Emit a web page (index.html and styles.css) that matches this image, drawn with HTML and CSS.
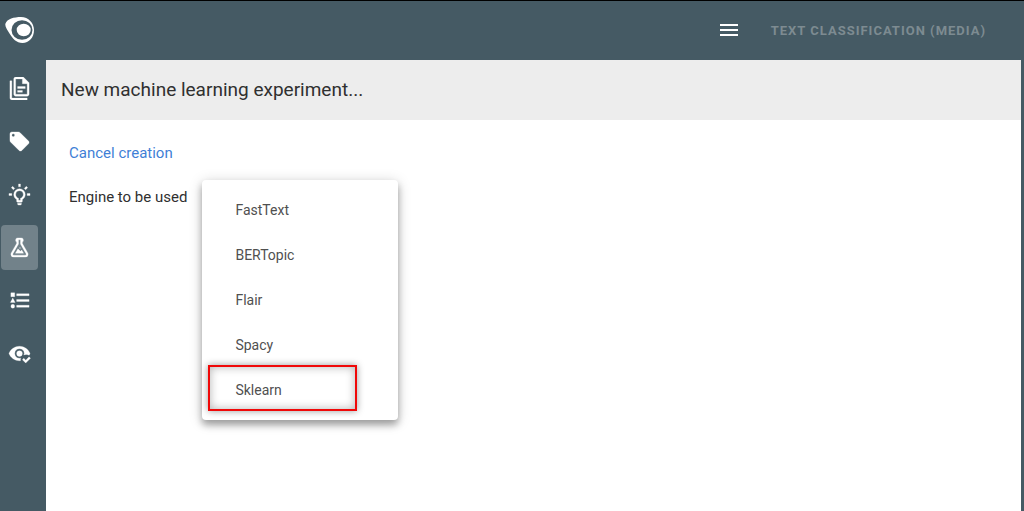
FILE: index.html
```html
<!DOCTYPE html>
<html lang="en">
<head>
  <meta charset="UTF-8" />
  <title>New machine learning experiment</title>
  <meta name="viewport" content="width=device-width, initial-scale=1" />
  <link rel="stylesheet" href="styles.css">
</head>
<body>
  <header class="topbar">
    <a class="logo" href="#" aria-label="Home">
      <svg width="30" height="28" viewBox="0 0 30 28">
        <path fill="#fff" d="M.5 7.500C2 3 9 1 16 1C23.500 1 29 7 29 14C29 21.500 24 27 17.500 27C11.500 27 7.500 22.500 4.500 17.500C2.500 14 -.5 10.500 .5 7.500Z"/>
        <ellipse cx="17" cy="14" rx="10.500" ry="9.800" fill="#455a64"/>
        <ellipse cx="18.700" cy="14" rx="7" ry="6.200" fill="#fff"/>
      </svg>
    </a>
    <div class="topbar-right">
      <button class="menu-button" aria-label="Menu">
        <svg width="24" height="24" viewBox="0 0 24 24"><path d="M3 6H21V8H3V6M3 11H21V13H3V11M3 16H21V18H3V16Z"/></svg>
      </button>
      <button class="project" disabled>Text classification (media)</button>
    </div>
  </header>

  <div class="layout">
    <nav class="sidebar">
      <a href="#" aria-label="Documents">
        <svg viewBox="0 0 24 24"><path d="M16 0H8C6.900 0 6 .9 6 2V18C6 19.100 6.900 20 8 20H20C21.100 20 22 19.100 22 18V6L16 0M20 18H8V2H15V7H20V18M4 4V22H20V24H4C2.900 24 2 23.100 2 22V4H4M10 10V12H18V10H10M10 14V16H15V14H10Z"/></svg>
      </a>
      <a href="#" aria-label="Labels">
        <svg viewBox="0 0 24 24"><path d="M5.500 7A1.500 1.500 0 0 1 4 5.500A1.500 1.500 0 0 1 5.500 4A1.500 1.500 0 0 1 7 5.500A1.500 1.500 0 0 1 5.500 7M21.410 11.580L12.410 2.580C12.050 2.220 11.550 2 11 2H4C2.890 2 2 2.890 2 4V11C2 11.550 2.220 12.050 2.590 12.410L11.580 21.410C11.950 21.770 12.450 22 13 22C13.550 22 14.050 21.770 14.410 21.410L21.410 14.410C21.780 14.050 22 13.550 22 13C22 12.440 21.770 11.940 21.410 11.580Z"/></svg>
      </a>
      <a href="#" aria-label="Suggestions">
        <svg viewBox="0 0 24 24"><path d="M20 11H23V13H20V11M1 11H4V13H1V11M13 1V4H11V1H13M4.920 3.500L7.050 5.640L5.630 7.050L3.500 4.930L4.920 3.500M16.950 5.630L19.070 3.500L20.500 4.930L18.370 7.050L16.950 5.630M12 6A6 6 0 0 1 18 12C18 14.220 16.790 16.160 15 17.200V19A1 1 0 0 1 14 20H10A1 1 0 0 1 9 19V17.200C7.210 16.160 6 14.220 6 12A6 6 0 0 1 12 6M14 21V22A1 1 0 0 1 13 23H11A1 1 0 0 1 10 22V21H14M11 18H13V15.870C14.730 15.430 16 13.860 16 12A4 4 0 0 0 12 8A4 4 0 0 0 8 12C8 13.860 9.270 15.430 11 15.870V18Z"/></svg>
      </a>
      <a class="active" href="#" aria-label="Experiments">
        <svg viewBox="0 0 24 24"><path d="M5 19A1 1 0 0 0 6 20H18A1 1 0 0 0 19 19C19 18.790 18.930 18.590 18.820 18.430L13 8.350V4H11V8.350L5.180 18.430C5.070 18.590 5 18.790 5 19M6 22A3 3 0 0 1 3 19C3 18.400 3.180 17.840 3.500 17.370L9 7.810V6A1 1 0 0 1 8 5V4A2 2 0 0 1 10 2H14A2 2 0 0 1 16 4V5A1 1 0 0 1 15 6V7.810L20.500 17.370C20.820 17.840 21 18.400 21 19A3 3 0 0 1 18 22H6M13 16L14.340 14.660L16.270 18H7.730L10.390 13.390L13 16M12.500 12A.5 .5 0 0 1 13 12.500A.5 .5 0 0 1 12.500 13A.5 .5 0 0 1 12 12.500A.5 .5 0 0 1 12.500 12Z"/></svg>
      </a>
      <a href="#" aria-label="Lists">
        <svg viewBox="0 0 24 24"><path d="M9 5V7H22V5H9M9 13H22V11H9V13M9 19H22V17H9V19M3 4H7V8H3V4M5 9.500L7.500 14H2.500L5 9.500M5 16A2 2 0 0 1 5 20A2 2 0 0 1 5 16Z"/></svg>
      </a>
      <a href="#" aria-label="Review">
        <svg viewBox="0 0 24 24"><path d="M23.500 17L18.500 22L15 18.500L16.500 17L18.500 19L22 15.500L23.500 17M12 9A3 3 0 0 1 15 12A3 3 0 0 1 12 15A3 3 0 0 1 9 12A3 3 0 0 1 12 9M12 17C12.500 17 12.970 16.930 13.420 16.790C13.150 17.330 13 17.950 13 18.500C13 18.830 13.030 19.160 13.080 19.450C12.720 19.500 12.360 19.500 12 19.500C7 19.500 2.730 16.390 1 12C2.730 7.610 7 4.500 12 4.500C17 4.500 21.270 7.610 23 12C22.750 12.640 22.440 13.260 22.080 13.850C21.180 13.310 20.120 13 19 13C18.060 13 17.210 13.200 16.420 13.570C16.790 13.100 17 12.560 17 12A5 5 0 0 0 12 7A5 5 0 0 0 7 12A5 5 0 0 0 12 17Z"/></svg>
      </a>
    </nav>

    <main class="content">
      <h1>New machine learning experiment...</h1>
      <div class="form">
        <a class="cancel" href="#">Cancel creation</a>
        <div class="field">
          <span id="engine-label">Engine to be used</span>
          <div class="engine">
            <div class="engine-menu" role="listbox" aria-labelledby="engine-label">
              <button role="option">FastText</button>
              <button role="option">BERTopic</button>
              <button role="option">Flair</button>
              <button role="option">Spacy</button>
              <button class="marked" role="option">Sklearn</button>
            </div>
          </div>
        </div>
      </div>
    </main>
  </div>
</body>
</html>
```
FILE: styles.css
```css
*,
*::after {
  box-sizing: border-box;
}
body {
  margin: 0;
  min-height: 100vh;
  display: flex;
  flex-direction: column;
  background: #455a64;
  color: #303030;
  font-family: Roboto, sans-serif;
  font-size: 15px;
  line-height: 24px;
}
svg {
  display: block;
  fill: #fff;
}
button {
  border: 0;
  background: none;
  font-family: inherit;
}

/* top bar */
.topbar {
  height: 60px;
  border-top: 1px solid #000;
  padding: 0 38px 1px 5px;
  display: flex;
  align-items: center;
  justify-content: space-between;
}
.topbar-right {
  display: flex;
  align-items: center;
  gap: 30px;
}
.menu-button {
  padding: 0;
}
.project {
  padding: 0;
  color: #7d8b91;
  font-size: 13px;
  font-weight: 700;
  letter-spacing: 1px;
  text-transform: uppercase;
}

/* side navigation */
.layout {
  flex: 1;
  display: flex;
  padding-right: 3px;
}
.sidebar {
  width: 46px;
  padding: 6px 8px 0 1px;
  display: flex;
  flex-direction: column;
  gap: 8px;
}
.sidebar a {
  height: 45px;
  border-radius: 4px;
  display: flex;
  align-items: center;
  justify-content: center;
}
.sidebar svg {
  width: 23px;
  height: 23px;
  stroke: #fff;
  stroke-width: 0.3;
}
.sidebar .active {
  background: #72828a;
}

/* page */
.content {
  flex: 1;
  background: #fff;
}
h1 {
  margin: 0;
  padding: 0 15px;
  background: #ededed;
  font-size: 19px;
  font-weight: 400;
  line-height: 60px;
}
.form {
  padding: 21px 23px;
}
.cancel {
  color: #3f7fd6;
  text-decoration: none;
}
.field {
  margin-top: 20px;
  display: flex;
  gap: 15px;
}
.engine {
  position: relative;
}
.engine-menu {
  position: absolute;
  top: -5px;
  left: 0;
  width: 196px;
  padding: 7px 0 8px;
  border-radius: 4px;
  background: #fff;
  box-shadow: 0 5px 7px rgba(0, 0, 0, 0.3), 0 2px 14px rgba(0, 0, 0, 0.18);
}
.engine-menu button {
  position: relative;
  display: block;
  width: 100%;
  height: 45px;
  padding: 0 33px;
  color: #505050;
  font-size: 14px;
  text-align: left;
}
.marked::after {
  content: "";
  position: absolute;
  top: -2px;
  left: 6px;
  width: 149px;
  height: 46px;
  border: 2px solid #f00808;
  box-shadow: 0 0 7px rgba(0, 0, 0, 0.4), inset 0 0 10px rgba(0, 0, 0, 0.3);
}
```
